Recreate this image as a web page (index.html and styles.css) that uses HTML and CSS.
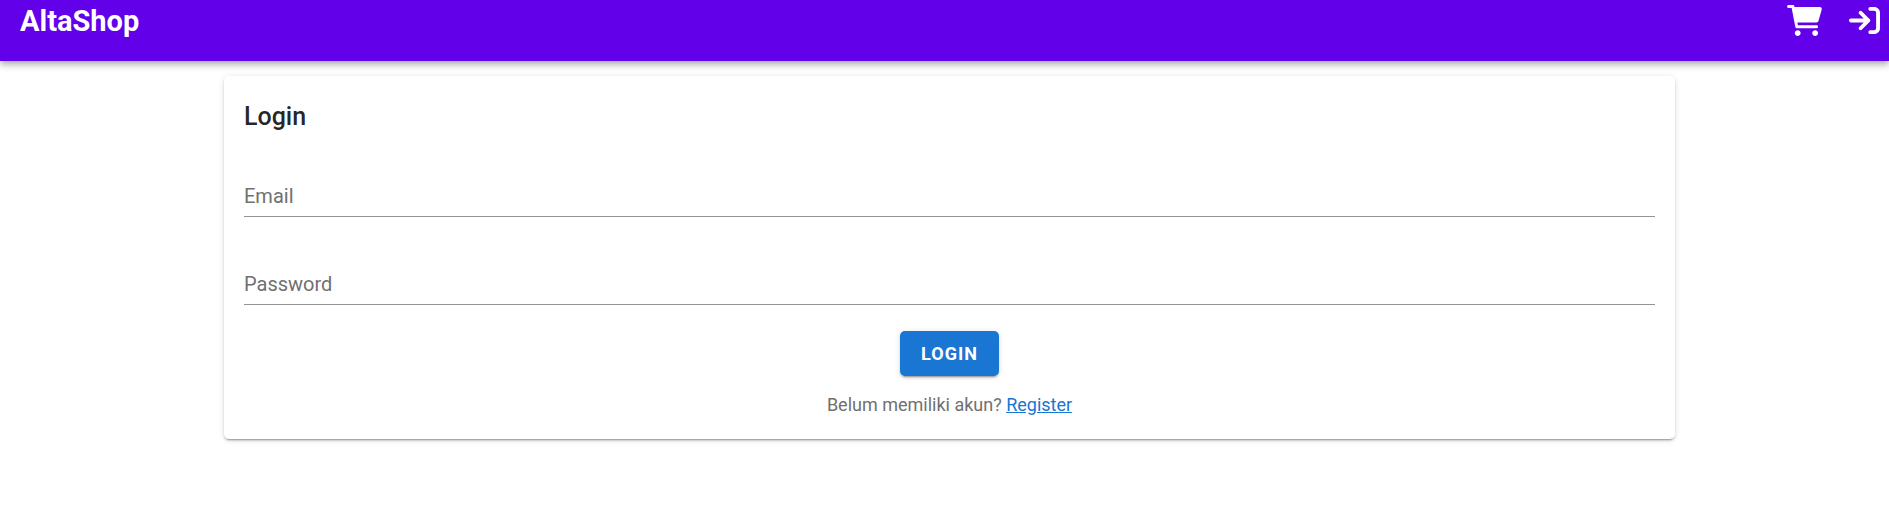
FILE: index.html
```html
<!DOCTYPE html>
<html lang="id">
<head>
<meta charset="utf-8">
<meta name="viewport" content="width=device-width, initial-scale=1">
<title>AltaShop</title>
<link rel="stylesheet" href="styles.css">
</head>
<body>
<header class="app-bar">
  <a class="brand" href="#">AltaShop</a>
  <nav class="actions">
    <button class="icon-button" type="button" aria-label="Cart">
      <svg class="icon-cart" viewBox="0 0 576 512" aria-hidden="true"><path d="M96 0C107.5 0 117.4 8.19 119.6 19.51L121.1 32H541.8C562.1 32 578.3 52.25 572.6 72.66L518.6 264.7C514.7 278.5 502.1 288 487.8 288H170.7L179.9 336H488C501.3 336 512 346.7 512 360C512 373.3 501.3 384 488 384H159.1C148.5 384 138.6 375.8 136.4 364.5L76.14 48H24C10.75 48 0 37.25 0 24C0 10.75 10.75 0 24 0H96zM128 464C128 437.5 149.5 416 176 416C202.5 416 224 437.5 224 464C224 490.5 202.5 512 176 512C149.5 512 128 490.5 128 464zM512 464C512 490.5 490.5 512 464 512C437.5 512 416 490.5 416 464C416 437.5 437.5 416 464 416C490.5 416 512 437.5 512 464z"/></svg>
    </button>
    <button class="icon-button" type="button" aria-label="Sign in">
      <svg class="icon-login" viewBox="0 0 512 512" aria-hidden="true"><path d="M416 32h-64c-17.67 0-32 14.33-32 32s14.33 32 32 32h64c17.67 0 32 14.33 32 32v256c0 17.67-14.33 32-32 32h-64c-17.67 0-32 14.33-32 32s14.33 32 32 32h64c53.02 0 96-42.98 96-96V128C512 74.98 469 32 416 32zM342.6 233.4l-128-128c-12.51-12.51-32.76-12.49-45.25 0c-12.5 12.5-12.5 32.75 0 45.25L242.8 224H32C14.31 224 0 238.3 0 256s14.31 32 32 32h210.8l-73.38 73.38c-12.5 12.5-12.5 32.75 0 45.25s32.75 12.5 45.25 0l128-128C355.1 266.1 355.1 245.9 342.6 233.4z"/></svg>
    </button>
  </nav>
</header>
<main class="container">
  <form class="card">
    <h1 class="card-title">Login</h1>
    <div class="fields">
      <input class="field" type="email" placeholder="Email" aria-label="Email">
      <input class="field" type="password" placeholder="Password" aria-label="Password">
    </div>
    <button class="submit" type="submit">LOGIN</button>
    <p class="hint">Belum memiliki akun? <a class="link" href="#">Register</a></p>
  </form>
</main>
</body>
</html>
```
FILE: styles.css
```css
* {
  box-sizing: border-box;
}

body {
  margin: 0;
  background: #fff;
  color: rgba(0, 0, 0, 0.87);
  font-family: Roboto, "Liberation Sans", sans-serif;
}

.app-bar {
  display: flex;
  justify-content: space-between;
  align-items: flex-start;
  padding: 0 9px 19px 20px;
  background: #6200ea;
  box-shadow: 0 2px 5px -1px rgba(0, 0, 0, 0.2), 0 5px 6px rgba(0, 0, 0, 0.14), 0 1px 12px rgba(0, 0, 0, 0.12);
}

.brand {
  color: #fff;
  font-size: 29px;
  font-weight: 700;
  line-height: 42px;
  text-decoration: none;
}

.actions {
  display: flex;
  align-items: center;
  gap: 27px;
  height: 41px;
}

.icon-button {
  display: flex;
  padding: 0;
  border: 0;
  background: none;
  color: #fff;
  cursor: pointer;
}

.icon-cart,
.icon-login {
  height: 31px;
  fill: currentColor;
}

.icon-cart {
  width: 35px;
}

.icon-login {
  width: 31px;
}

.container {
  max-width: 1491px;
  margin: 0 auto;
  padding: 15px 15px 15px 25px;
}

.card {
  display: flex;
  flex-direction: column;
  padding: 20px;
  border-radius: 5px;
  background: #fff;
  box-shadow: 0 4px 1px -3px rgba(0, 0, 0, 0.2), 0 2px 2px rgba(0, 0, 0, 0.14), 0 1px 6px rgba(0, 0, 0, 0.12);
}

.card-title {
  margin: 0;
  font-size: 25px;
  font-weight: 500;
  line-height: 42px;
}

.fields {
  display: flex;
  flex-direction: column;
  gap: 48px;
  margin: 39px 0 26px;
}

.field {
  width: 100%;
  height: 40px;
  padding: 0 0 1px;
  border: 0;
  border-bottom: 1px solid #949494;
  border-radius: 0;
  outline: 0;
  background: none;
  color: inherit;
  font: 20px Roboto, "Liberation Sans", sans-serif;
}

.field::placeholder {
  color: #707070;
  opacity: 1;
}

.submit {
  align-self: center;
  height: 45px;
  padding: 0 21px;
  border: 0;
  border-radius: 5px;
  background: #1976d2;
  box-shadow: 0 4px 1px -3px rgba(0, 0, 0, 0.2), 0 2px 2px rgba(0, 0, 0, 0.14), 0 1px 6px rgba(0, 0, 0, 0.12);
  color: #fff;
  font: 700 18px Roboto, "Liberation Sans", sans-serif;
  letter-spacing: 1px;
  cursor: pointer;
}

.hint {
  margin: 15px 0 0;
  color: #707070;
  font-size: 18px;
  line-height: 28px;
  text-align: center;
}

.link {
  color: #1976d2;
}
```
